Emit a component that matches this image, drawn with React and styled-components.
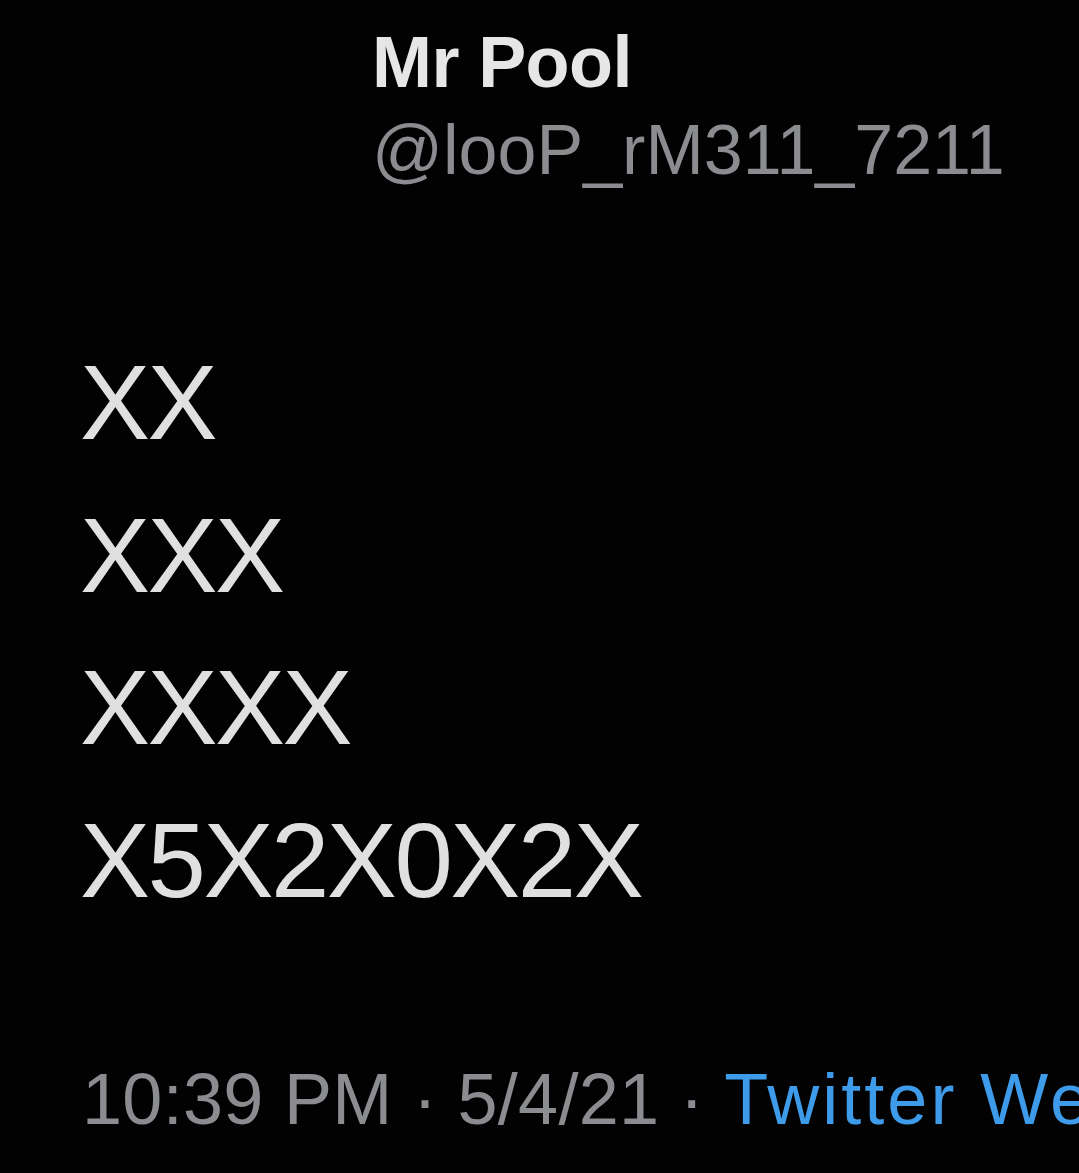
import React from "react";
import styled, { createGlobalStyle } from "styled-components";

const GlobalStyle = createGlobalStyle`
  html, body {
    margin: 0;
    padding: 0;
    background: #000;
    overflow: hidden;
  }
  body {
    font-family: "Liberation Sans", Arial, Helvetica, sans-serif;
  }
`;

const Page = styled.div`
  width: 1079px;
  height: 1173px;
  background: #020202;
  overflow: hidden;
  display: flex;
  flex-direction: column;
  padding-top: 22px;
  box-sizing: border-box;
`;

const Header = styled.div`
  display: flex;
  flex-direction: column;
  padding-left: 372px;
`;

const Name = styled.div`
  color: #e6e6e6;
  font-size: 72px;
  font-weight: 700;
  line-height: 80px;
  letter-spacing: -0.6px;
`;

const Handle = styled.div`
  color: #8b8c90;
  font-size: 70px;
  line-height: 88px;
  margin-top: 4px;
  letter-spacing: 0;
`;

const Body = styled.div`
  display: flex;
  flex-direction: column;
  padding-left: 80px;
  margin-top: 133px;
`;

const Line = styled.div`
  color: #e0e0e0;
  font-size: 105px;
  font-weight: 400;
  line-height: 152.5px;
  letter-spacing: -2.5px;
`;

const Meta = styled.div`
  display: flex;
  padding-left: 82px;
  margin-top: 122px;
  font-size: 72px;
  line-height: 80px;
  white-space: nowrap;
  letter-spacing: 0.3px;
  color: #8b8c90;
`;

const Source = styled.span`
  color: ${(p) => p.color || "#3d9bea"};
  letter-spacing: 3px;
`;

const lines = ["XX", "XXX", "XXXX", "X5X2X0X2X"];

const App = () => {
  return (
    <Page>
      <GlobalStyle />
      <Header>
        <Name>Mr Pool</Name>
        <Handle>@looP_rM311_7211</Handle>
      </Header>
      <Body>
        {lines.map((l) => (
          <Line key={l}>{l}</Line>
        ))}
      </Body>
      <Meta>
        <span>10:39 PM · 5/4/21 ·&nbsp;</span>
        <Source>Twitter Web App</Source>
      </Meta>
    </Page>
  );
};

export default App;
